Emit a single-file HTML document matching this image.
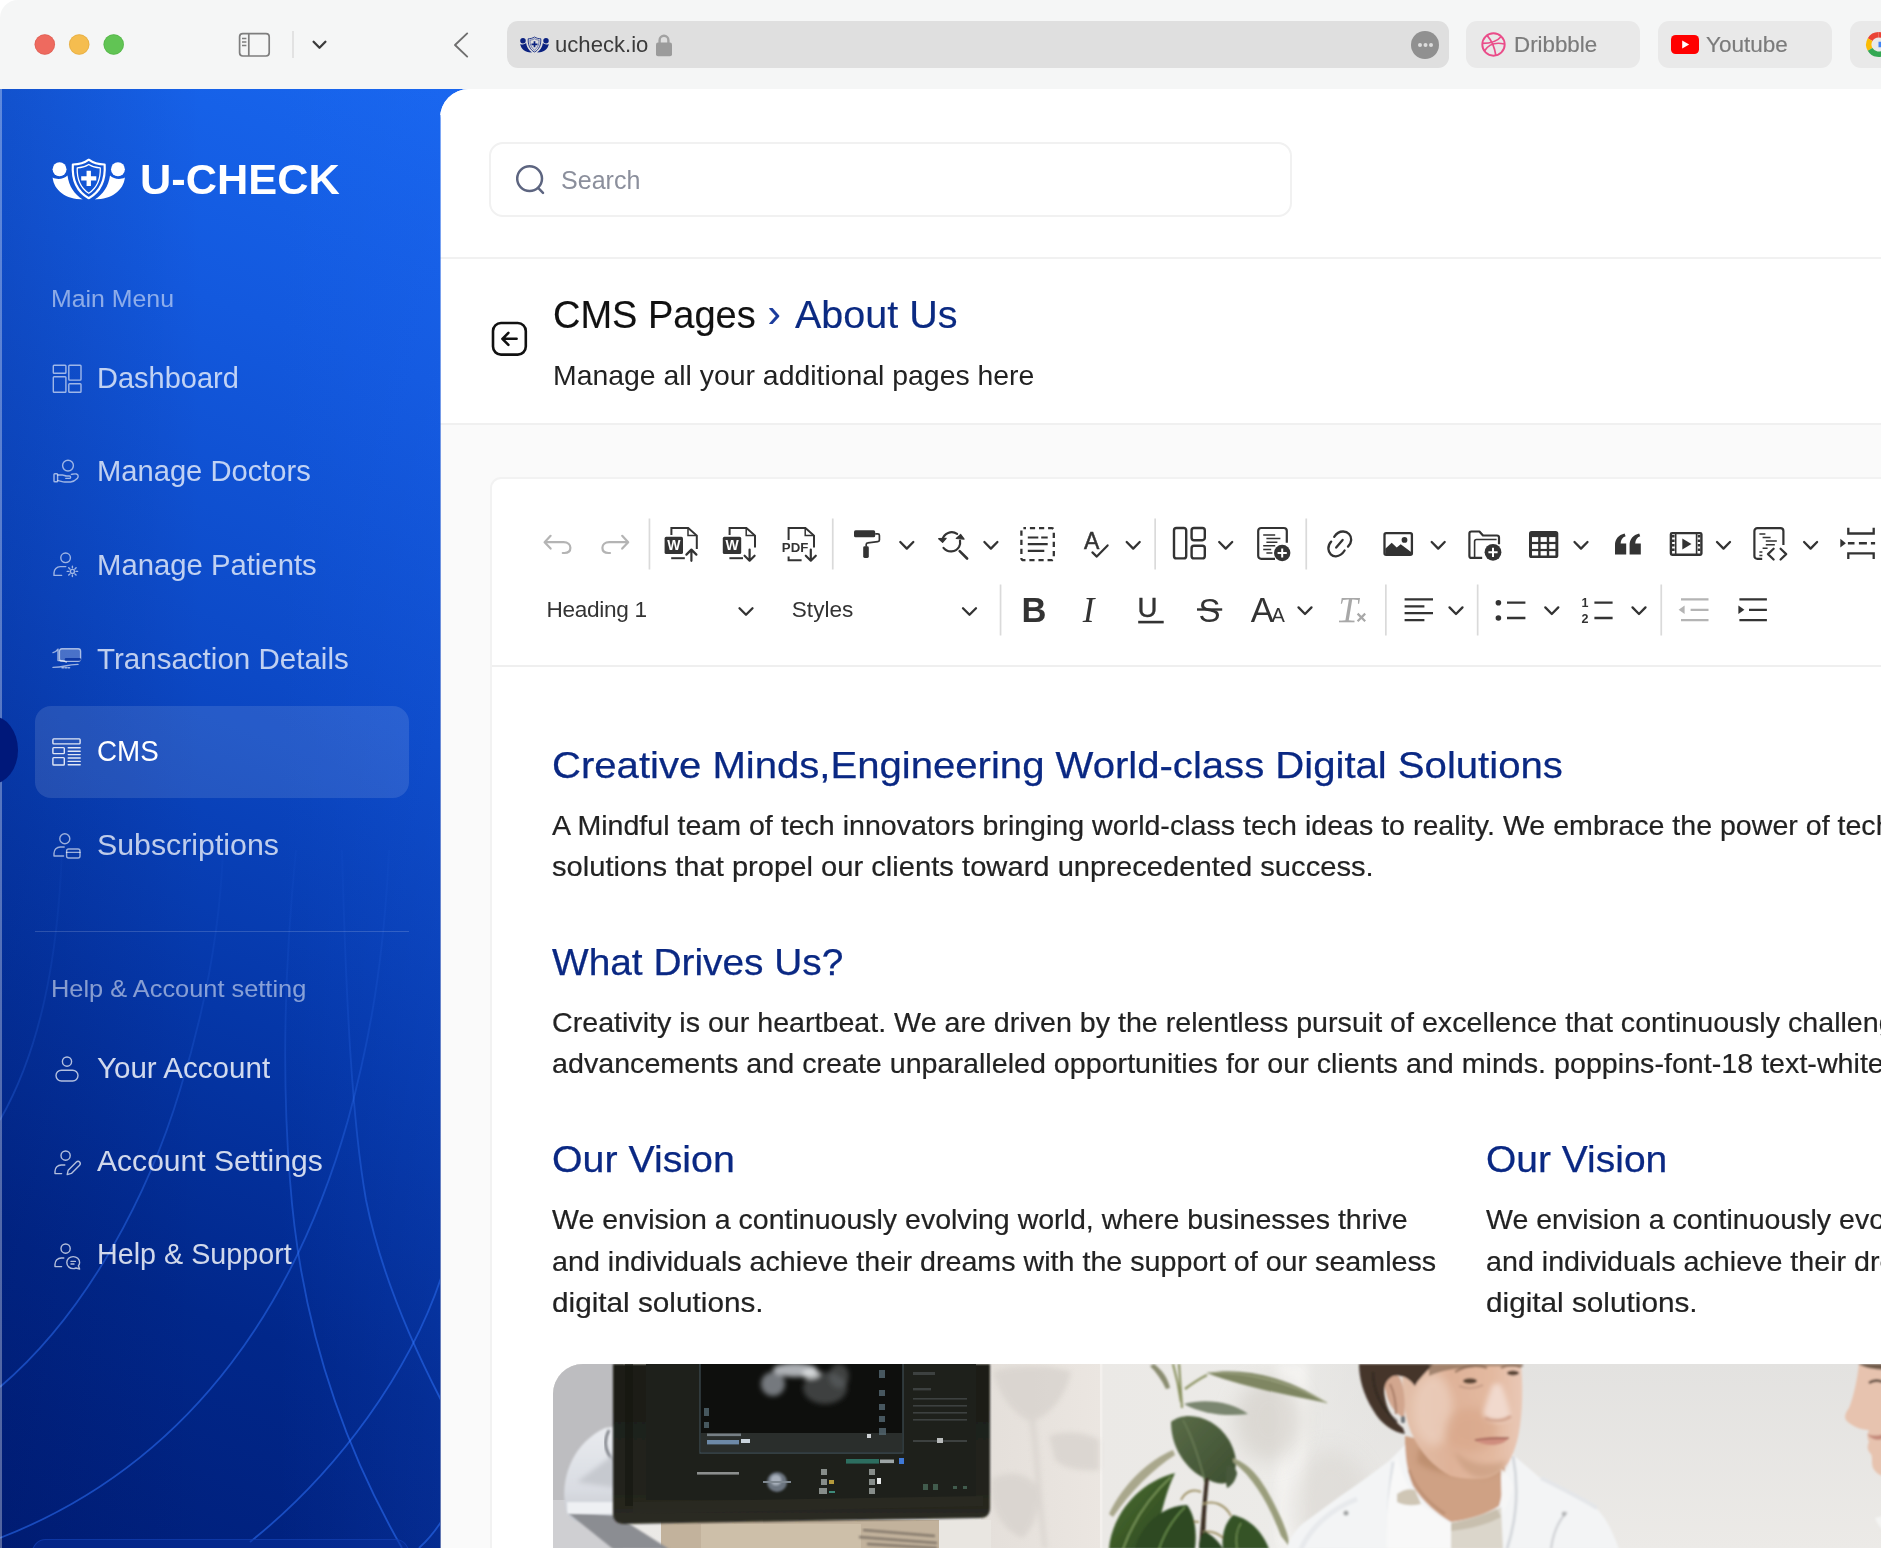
<!DOCTYPE html>
<html lang="en">
<head>
<meta charset="utf-8">
<title>U-CHECK – CMS Pages › About Us</title>
<style>
*{box-sizing:border-box;margin:0;padding:0}
html,body{width:1881px;height:1548px;overflow:hidden;background:#fff}
body{position:relative;font-family:"Liberation Sans",Arial,Helvetica,sans-serif;color:#1d1d1f;-webkit-font-smoothing:antialiased}
.abs{position:absolute}
.t{position:absolute;white-space:nowrap;line-height:1;transform-origin:0 50%}
svg{display:block;overflow:visible}

/* ---------- browser chrome ---------- */
#win{will-change:transform;position:absolute;left:0;top:0;width:1881px;height:1548px;border-top-left-radius:18px;overflow:hidden;background:#fff}
#chrome{position:absolute;left:0;top:0;width:1881px;height:89px;background:#f5f6f6}
.dot{position:absolute;top:34px;width:20px;height:20px;border-radius:50%}
#urlbar{position:absolute;left:507px;top:21px;width:942px;height:47px;border-radius:11px;background:#dfdfdf}
.tab{position:absolute;top:21px;height:47px;border-radius:11px;background:#e9e9e9}
.tab .t{color:#7b7b7b;-webkit-text-stroke:.2px #7b7b7b}

/* ---------- sidebar ---------- */
#side{position:absolute;left:0;top:89px;width:480px;height:1459px;overflow:hidden;
  background:linear-gradient(90deg,rgba(0,8,70,.15) 0%,rgba(0,8,70,0) 42%,rgba(40,110,255,0) 58%,rgba(40,110,255,.11) 92%),linear-gradient(201deg,#1866ee 0%,#1359de 19%,#0c49c6 41%,#0537a8 62%,#01278a 81%,#001f7a 100%)}
#side .edge{position:absolute;left:0;top:0;width:2px;height:100%;background:rgba(255,255,255,.32)}
.sec{color:rgba(255,255,255,.52);font-size:23px}
.mi{color:rgba(255,255,255,.74);font-size:27.5px}
.mi.on{color:#fff}
.mi.acc{color:rgba(255,255,255,.82)}
.ico.a *{stroke:rgba(255,255,255,.7)}
#active{position:absolute;left:35px;top:616.5px;width:374px;height:92.5px;border-radius:16px;background:rgba(255,255,255,.115)}
#notch{position:absolute;left:-34px;top:627px;width:52px;height:68px;border-radius:50%;background:#00187a}
#sdiv{position:absolute;left:35px;top:841.5px;width:374px;height:1.3px;background:rgba(255,255,255,.16)}
.ico{position:absolute}
.ico *{fill:none;stroke:rgba(255,255,255,.6);stroke-width:1.4;stroke-linecap:round;stroke-linejoin:round}
.ico.on *{stroke:rgba(255,255,255,.86)}

/* ---------- main ---------- */
#main{position:absolute;left:440px;top:89px;width:1441px;height:1459px;background:#fafafa;border-top-left-radius:29px;overflow:hidden}
#main .seam{z-index:5;position:absolute;left:0;top:26px;width:1px;height:1440px;background:linear-gradient(180deg,rgba(40,110,240,.6),rgba(10,60,180,.6) 50%,rgba(0,34,130,.6))}
#top{position:absolute;left:0;top:0;width:1441px;height:170px;background:#fff;border-bottom:2px solid #f1f1f1}
#search{position:absolute;left:49px;top:53px;width:803px;height:75px;border:2px solid #f1f1f1;border-radius:14px;background:#fff}
#head{position:absolute;left:0;top:170px;width:1441px;height:166px;background:#fff;border-bottom:2px solid #f0f0f0}
#card{position:absolute;left:50px;top:388px;width:1420px;height:1100px;background:#fff;border:2px solid #f2f2f2;border-radius:11px 0 0 0}
#tbline{position:absolute;left:0;top:186px;width:1420px;height:2px;background:#efefef}
.h{color:#0a2883;font-size:37px;-webkit-text-stroke:.25px #0a2883}
.p{color:#222;font-size:27.5px;-webkit-text-stroke:.2px #222}
.vs{position:absolute;width:2px;background:#dcdcdc}
.ti{position:absolute}
.ti *{fill:none;stroke:#333;stroke-width:2;stroke-linecap:round;stroke-linejoin:round}
.ti .f{fill:#333;stroke:none}
.ti.dim *{stroke:#a9a9a9}
.ti.dim .f{fill:#a9a9a9;stroke:none}
.cv{position:absolute}
.cv path{fill:none;stroke:#333;stroke-width:2.4;stroke-linecap:round;stroke-linejoin:round}
.tl{color:#333;font-size:22px}
#photo{position:absolute;left:60.5px;top:885px;width:1400px;height:200px;border-radius:30px 0 0 0;overflow:hidden;background:#e4e2df}
h1.t,h2.t{font-weight:400}
.ttl{-webkit-text-stroke:.15px currentColor}
</style>
</head>
<body>
<div id="win">
<svg width="0" height="0" style="position:absolute">
  <defs>
    <symbol id="logo" viewBox="0 0 74 42">
      <circle cx="7.6" cy="11.2" r="7" fill="currentColor"/>
      <circle cx="66.4" cy="11.2" r="7" fill="currentColor"/>
      <path d="M.6 19.5C2 32.5 14 41.6 31 41.6 22.5 36.5 17 28 15.6 17.4 12 21 5.6 22.2.6 19.5Z" fill="currentColor"/>
      <path d="M73.4 19.5C72 32.5 60 41.6 43 41.6 51.500 36.5 57 28 58.4 17.400 62 21 68.4 22.200 73.4 19.5Z" fill="currentColor"/>
      <path d="M37 1.600C32.500 5 26.500 6.400 21 6.400 20 21.500 25 33.500 37 40.400 49 33.500 54 21.500 53 6.400 47.500 6.400 41.500 5 37 1.600Z" fill="none" stroke="currentColor" stroke-width="2.2" stroke-linejoin="round"/>
      <path d="M37 6.400C33.600 8.600 29.500 9.700 25.400 9.900 25 21 28.800 30 37 35.400 45.200 30 49 21 48.600 9.900 44.500 9.700 40.400 8.600 37 6.400Z" fill="none" stroke="currentColor" stroke-width="1.300" stroke-linejoin="round"/>
      <path d="M34.800 12.800h4.400v5.400h5.400v4.400h-5.400v5.400h-4.400v-5.400h-5.400v-4.400h5.400z" fill="currentColor"/>
    </symbol>
  </defs>
</svg>

<!-- ================= BROWSER CHROME ================= -->
<div id="chrome">
  <svg class="abs" style="left:30px;top:30px" width="100" height="30" viewBox="30 30 100 30">
    <circle cx="44.800" cy="44.500" r="10.200" fill="#ee6a5f"/><circle cx="44.800" cy="44.500" r="9.800" fill="none" stroke="#c9544a" stroke-opacity=".45" stroke-width=".8"/>
    <circle cx="79.200" cy="44.500" r="10.200" fill="#f5bd4f"/><circle cx="79.200" cy="44.500" r="9.800" fill="none" stroke="#cf9a34" stroke-opacity=".45" stroke-width=".8"/>
    <circle cx="113.700" cy="44.500" r="10.200" fill="#61c454"/><circle cx="113.700" cy="44.500" r="9.800" fill="none" stroke="#46a23b" stroke-opacity=".45" stroke-width=".8"/>
  </svg>
  <!-- sidebar toggle -->
  <svg class="abs" style="left:238px;top:32px" width="33" height="26" viewBox="0 0 33 26">
    <rect x="1.6" y="1.6" width="29.6" height="22.4" rx="3.2" fill="none" stroke="#7e7e7e" stroke-width="1.7"/>
    <path d="M10.8 2v22" stroke="#7e7e7e" stroke-width="1.7" fill="none"/>
    <path d="M4 6.4h4.4M4 10h4.4M4 13.6h4.4" stroke="#7e7e7e" stroke-width="1.5" fill="none"/>
  </svg>
  <div class="abs" style="left:292px;top:31px;width:1.5px;height:27px;background:#e2e2e2"></div>
  <svg class="abs" style="left:312px;top:40px" width="15" height="10" viewBox="0 0 15 10"><path d="M1.6 1.8l5.9 6 5.9-6" fill="none" stroke="#3b3b3b" stroke-width="2.3" stroke-linecap="round" stroke-linejoin="round"/></svg>
  <svg class="abs" style="left:453px;top:32px" width="16" height="26" viewBox="0 0 16 26"><path d="M14.2 1.4L2 13l12.2 11.6" fill="none" stroke="#6f6f6f" stroke-width="1.9" stroke-linecap="round" stroke-linejoin="round"/></svg>
  <div id="urlbar">
    <svg class="abs" style="left:13px;top:15px" width="29" height="17" viewBox="0 0 74 42"><use href="#logo" color="#0b2280"/></svg>
    <span class="t" style="left:48.30px;top:12.20px;font-size:22.8px;transform:scaleX(0.9699);color:#3a3a3a;">ucheck.io</span>
    <svg class="abs" style="left:148px;top:12px" width="18" height="24" viewBox="0 0 18 24">
      <path d="M4.6 10V7.2a4.4 4.4 0 0 1 8.8 0V10" fill="none" stroke="#a2a2a2" stroke-width="2.4"/>
      <rect x="1" y="9.6" width="16" height="13.6" rx="2" fill="#9b9b9b"/>
    </svg>
    <div class="abs" style="left:904px;top:10px;width:28px;height:28px;border-radius:50%;background:#909090"></div>
    <div class="abs" style="left:910.5px;top:22px;width:4px;height:4px;border-radius:50%;background:#dcdcdc;box-shadow:5.5px 0 0 #dcdcdc,11px 0 0 #dcdcdc"></div>
  </div>
  <div class="tab" style="left:1466px;width:174px">
    <svg class="abs" style="left:15px;top:11px" width="25" height="25" viewBox="0 0 25 25">
      <circle cx="12.5" cy="12.5" r="11.2" fill="none" stroke="#ea4c89" stroke-width="1.9"/>
      <path d="M6.2 3.6c4 4.4 7.2 10.6 8.6 19.6M1.6 11.4c7.4 0 14.2-1.6 18.4-6.6M3.4 19c3.6-5.8 10.6-9.2 20-7" fill="none" stroke="#ea4c89" stroke-width="1.7"/>
    </svg>
    <span class="t" style="left:48.30px;top:12.64px;font-size:22.4px;transform:scaleX(0.9975);">Dribbble</span>
  </div>
  <div class="tab" style="left:1658px;width:174px">
    <svg class="abs" style="left:13px;top:14px" width="28" height="19" viewBox="0 0 28 19">
      <rect x="0" y="0" width="28" height="19" rx="4.6" fill="#f00"/>
      <path d="M11.2 5.4v8.2l7-4.1z" fill="#fff"/>
    </svg>
    <span class="t" style="left:48.30px;top:12.64px;font-size:22.4px;transform:scaleX(1.0037);">Youtube</span>
  </div>
  <div class="tab" style="left:1850px;width:174px">
    <svg class="abs" style="left:15px;top:10px" width="27" height="27" viewBox="0 0 27 27">
      <g fill="none" stroke-width="5.400">
        <path d="M13.500 3.700a9.800 9.800 0 0 1 7 2.900" stroke="#ea4335"/>
        <path d="M5.100 8.600A9.800 9.800 0 0 1 13.500 3.700" stroke="#ea4335"/>
        <path d="M5.100 18.400a9.800 9.800 0 0 1 0-9.800" stroke="#fbbc05"/>
        <path d="M20.300 20.600a9.800 9.800 0 0 1-15.200-2.200" stroke="#34a853"/>
        <path d="M13.500 13.500h9.800a9.800 9.800 0 0 1-3 7.100" stroke="#4285f4"/>
      </g>
    </svg>
  </div>
</div>

<!-- ================= SIDEBAR ================= -->
<div id="side">
  <svg class="abs" style="left:0;top:0" width="441" height="1459" viewBox="0 89 441 1459">
    <defs>
      <linearGradient id="arcs" gradientUnits="userSpaceOnUse" x1="0" y1="840" x2="0" y2="1420">
        <stop offset="0" stop-color="#3a7cff" stop-opacity=".03"/>
        <stop offset=".3" stop-color="#3a7cff" stop-opacity=".14"/>
        <stop offset=".62" stop-color="#3378ff" stop-opacity=".4"/>
        <stop offset="1" stop-color="#2f74ff" stop-opacity=".52"/>
      </linearGradient>
    </defs>
    <g fill="none" stroke="url(#arcs)" stroke-width="1.800">
      <path d="M62 850C58 960 40 1050 0 1120"/>
      <path d="M223 850C220 930 205 1010 180 1090C150 1190 90 1310 0 1387"/>
      <path d="M389 850C384 960 370 1040 348 1120C300 1290 200 1460 0 1538"/>
      <path d="M296 850C284 970 282 1080 290 1180C300 1320 340 1440 402 1548"/>
      <path d="M342 850C346 1000 352 1120 366 1200C380 1270 410 1340 441 1400"/>
      <path d="M250 1542C340 1470 410 1370 441 1278"/>
      <path d="M419 1548C428 1540 435 1531 441 1522"/>
    </g>
    <rect x="32.5" y="1539.5" width="376" height="30" rx="13" fill="#0a2f9c" fill-opacity=".5" stroke="#1440b4" stroke-opacity=".7" stroke-width="1.200"/>
  </svg>
  <div class="edge"></div>

  <svg class="abs" style="left:51.5px;top:69px" width="73.5" height="42" viewBox="0 0 74 42"><use href="#logo" color="#fff"/></svg>
  <span class="t" style="left:139.80px;top:69.20px;font-size:43px;transform:scaleX(1.0073);font-weight:700;color:#fff;">U-CHECK</span>

  <span class="t sec" style="left:50.60px;top:197.96px;font-size:24.5px;transform:scaleX(1.0151);">Main Menu</span>

  <svg class="ico" style="left:51.500px;top:274.500px" width="30" height="30" viewBox="0 0 30 30"><rect x="1.300" y="1.300" width="12.600" height="8" rx=".8"/><rect x="1.300" y="12.800" width="12.600" height="15.400" rx=".8"/><rect x="16.800" y="1.300" width="12.200" height="14.800" rx=".8"/><rect x="16.800" y="19.800" width="12.200" height="8.400" rx=".8"/></svg>
  <span class="t mi" style="left:96.60px;top:274.78px;font-size:29.2px;transform:scaleX(0.9936);">Dashboard</span>

  <svg class="ico" style="left:53px;top:370px" width="28" height="26" viewBox="0 0 28 26"><circle cx="15" cy="6.600" r="5.400"/><rect x="1" y="14.800" width="3.600" height="8" rx=".8"/><path d="M4.800 16h4.600c1.600 0 2.600 1 4.200 1h2.800c1.600 0 1.600 2.400 0 2.400h-3.600M4.800 21.600c2.800 0 4 1.400 6.800 1.400h6c2.800 0 5-1.800 6.600-3.400 1.200-1.400 1.600-3.800-.8-4.600-1.400-.4-3 0-5 .4"/></svg>
  <span class="t mi" style="left:96.60px;top:368.38px;font-size:29.2px;transform:scaleX(0.9983);">Manage Doctors</span>

  <svg class="ico" style="left:53px;top:463px" width="28" height="26" viewBox="0 0 28 26"><circle cx="12.6" cy="5.800" r="4.800"/><path d="M1 23.400v-2.600c0-3.400 2.800-6.200 6.200-6.200h5.600M1 23.400h7.600"/><circle cx="19.400" cy="19.400" r="2"/><path d="M19.400 14.200v1.600M19.400 23v1.600M14.200 19.400h1.600M23 19.400h1.600M15.700 15.700l1.200 1.200M21.900 21.900l1.200 1.200M15.700 23.100l1.200-1.200M21.900 16.900l1.200-1.200"/></svg>
  <span class="t mi" style="left:96.60px;top:461.98px;font-size:29.2px;transform:scaleX(1.0029);">Manage Patients</span>

  <svg class="ico" style="left:52px;top:558.500px" width="30" height="22" viewBox="0 0 30 22"><rect x="7.400" y=".8" width="21.200" height="12.400" rx="2.400" style="fill:rgba(255,255,255,.26)"/><path d="M14 11.400h13.600" style="stroke:rgba(8,50,160,.9);stroke-width:2.600"/><path d="M1 4.600c2-.4 3.800-1.600 5-3.400v11.400h4.400c1.600 0 2.400 1 4 1.400"/><path d="M1 19.400c4 0 8-.4 12-1.400 4-1 8-1.600 13-1.600"/><path d="M10 19.800h8" style="stroke-dasharray:1.600 1.400"/></svg>
  <span class="t mi" style="left:96.60px;top:555.58px;font-size:29.2px;transform:scaleX(1.0122);">Transaction Details</span>

  <div id="notch"></div>
  <div id="active"></div>
  <svg class="ico on" style="left:52px;top:648.500px" width="29" height="28" viewBox="0 0 29 28"><rect x=".9" y=".9" width="27.2" height="5" rx=".8"/><rect x=".9" y="9.600" width="11.4" height="6" rx=".8"/><rect x=".9" y="19.600" width="11.4" height="7.400" rx=".8"/><path d="M16.200 9.800h12M16.200 13.200h12M16.200 16.600h12M16.200 20h12M16.200 23.400h12M16.200 26.800h12"/></svg>
  <span class="t mi on" style="left:96.60px;top:648.28px;font-size:29.2px;transform:scaleX(0.9509);">CMS</span>

  <svg class="ico" style="left:53px;top:743px" width="28" height="27" viewBox="0 0 28 27"><circle cx="11.800" cy="6.800" r="5"/><path d="M1 24v-2.800c0-3.400 2.800-6.200 6.200-6.200h4M1 24h9.600"/><rect x="13.600" y="17" width="13.400" height="9" rx="2"/><path d="M13.600 20.400h13.400"/></svg>
  <span class="t mi" style="left:96.60px;top:741.58px;font-size:29.2px;transform:scaleX(1.0386);">Subscriptions</span>

  <div id="sdiv"></div>
  <span class="t sec" style="left:50.60px;top:888.16px;font-size:24.5px;transform:scaleX(1.0354);">Help &amp; Account setting</span>

  <svg class="ico a" style="left:55px;top:967px" width="24" height="26" viewBox="0 0 24 26"><circle cx="12" cy="5.600" r="4.600"/><rect x="1" y="14.200" width="22" height="10.800" rx="5.400"/></svg>
  <span class="t mi acc" style="left:96.60px;top:964.98px;font-size:29.2px;transform:scaleX(1.0126);">Your Account</span>

  <svg class="ico a" style="left:54px;top:1061px" width="27" height="26" viewBox="0 0 27 26"><circle cx="11.600" cy="5.600" r="4.600"/><path d="M1 23.600v-2.400c0-3.400 2.800-6.200 6.200-6.200h3.600M1 23.600h6.600"/><path d="M13.200 24.600l1-4.400 8.200-8.200c1-1 2.400-1 3.200 0s1 2.200 0 3.200l-8.200 8.200z"/></svg>
  <span class="t mi acc" style="left:96.60px;top:1058.08px;font-size:29.2px;transform:scaleX(1.0303);">Account Settings</span>

  <svg class="ico a" style="left:54px;top:1154px" width="27" height="27" viewBox="0 0 27 27"><circle cx="11.600" cy="5.600" r="4.600"/><path d="M1 23.600v-2.400c0-3.400 2.800-6.200 6.200-6.200h2.600M1 23.600h6.600"/><path d="M19.200 13.600c-3.600 0-6.400 2.600-6.400 6s2.800 6 6.400 6c1 0 2-.2 2.800-.6l3.600 1-1.200-3.200c.8-1 1.200-2 1.200-3.200 0-3.400-2.800-6-6.400-6z"/><path d="M17 18.400h4.400M17 21h3"/></svg>
  <span class="t mi acc" style="left:96.60px;top:1151.28px;font-size:29.2px;transform:scaleX(0.9835);">Help &amp; Support</span>
</div>

<!-- ================= MAIN ================= -->
<div id="main">
  <div class="seam"></div>
  <div id="top">
    <div id="search">
      <svg class="abs" style="left:24px;top:20px" width="32" height="32" viewBox="0 0 32 32"><circle cx="14.6" cy="14.6" r="12.4" fill="none" stroke="#5d6580" stroke-width="2.5"/><path d="M23.400 24.200l4.600 4.600" stroke="#5d6580" stroke-width="2.5" stroke-linecap="round" fill="none"/></svg>
      <span class="t" style="left:69.50px;top:23.54px;font-size:25px;transform:scaleX(1.0020);color:#8b8f9c;">Search</span>
    </div>
  </div>
  <div id="head">
    <svg class="abs" style="left:50.5px;top:62px" width="37" height="36" viewBox="0 0 37 36"><rect x="2" y="2" width="32.8" height="31.6" rx="8" fill="none" stroke="#111" stroke-width="2.6"/><path d="M25.600 17.800H11.800M17.400 11.800l-6 6 6 6" fill="none" stroke="#111" stroke-width="2.6" stroke-linecap="round" stroke-linejoin="round"/></svg>
    <span class="t ttl" style="left:112.50px;top:36.06px;font-size:39.5px;transform:scaleX(0.9620);color:#111;">CMS Pages</span>
    <span class="t ttl" style="left:327.50px;top:33.64px;font-size:40px;color:#1b3c9c;">›</span>
    <span class="t ttl" style="left:355.00px;top:36.06px;font-size:39.5px;transform:scaleX(0.9999);color:#0b2a82;">About Us</span>
    <span class="t" style="left:112.50px;top:101.57px;font-size:28.5px;transform:scaleX(0.9960);color:#222;">Manage all your additional pages here</span>
  </div>

  <div id="card">
    <div id="tbline"></div>
    <svg class="abs" id="tb" style="left:0;top:0" width="1389" height="186" viewBox="492 479 1389 186" font-family="'Liberation Sans',Arial,sans-serif">
      <defs>
        <path id="chev" d="M-6.500 -3.400L0 3.200 6.500 -3.400" fill="none" stroke="#333" stroke-width="2.300" stroke-linecap="round" stroke-linejoin="round"/>
      </defs>
      <g fill="#dadada">
        <rect x="648.6" y="518.5" width="1.700" height="51"/><rect x="831.900" y="518.5" width="1.700" height="51"/>
        <rect x="1154.3" y="518.5" width="1.700" height="51"/><rect x="1305.4" y="518.5" width="1.700" height="51"/>
        <rect x="999.700" y="584.5" width="1.700" height="51"/><rect x="1385" y="584.5" width="1.700" height="51"/>
        <rect x="1476.800" y="584.5" width="1.700" height="51"/><rect x="1660.400" y="584.5" width="1.700" height="51"/>
      </g>
      <!-- row 1 chevrons -->
      <use href="#chev" x="906.800" y="545.400"/><use href="#chev" x="990.900" y="545.400"/><use href="#chev" x="1133.2" y="545.400"/>
      <use href="#chev" x="1225.700" y="545.400"/><use href="#chev" x="1438.2" y="545.400"/><use href="#chev" x="1581" y="545.400"/>
      <use href="#chev" x="1723.500" y="545.400"/><use href="#chev" x="1810.600" y="545.400"/>
      <!-- row 2 chevrons -->
      <use href="#chev" x="746" y="611.600"/><use href="#chev" x="969.500" y="611.600"/><use href="#chev" x="1305" y="610.800"/>
      <use href="#chev" x="1456" y="610.800"/><use href="#chev" x="1551.800" y="610.800"/><use href="#chev" x="1639" y="610.800"/>

      <!-- undo / redo (disabled) -->
      <g fill="none" stroke="#b4b4b4" stroke-width="2.200" stroke-linecap="round" stroke-linejoin="round">
        <path d="M550.600 535.800l-6 6.400 6 6.400M545 542.200h18.600c4.200 0 6.800 2.400 6.800 5.600s-2.400 5.200-6 5.200h-1.600"/>
        <path d="M622.200 535.800l6 6.400-6 6.400M627.800 542.200h-18.600c-4.200 0-6.800 2.400-6.800 5.600s2.400 5.200 6 5.200h1.600"/>
      </g>

      <!-- import from word -->
      <g transform="translate(664.600 527)">
        <path d="M6.800 8V1h16.800l8.600 7.600V22" fill="none" stroke="#333" stroke-width="2"/>
        <path d="M23.400 1.400v7h8" fill="none" stroke="#333" stroke-width="1.500"/>
        <rect x="0" y="9.800" width="18.400" height="17.200" rx="1.600" fill="#333"/>
        <text x="9.200" y="23.400" font-size="14" font-weight="700" text-anchor="middle" fill="#fff">W</text>
        <path d="M6.600 31.200h13.600" stroke="#333" stroke-width="2" fill="none"/>
        <path d="M26.800 33.800V23M21.800 27.600l5-5 5 5" fill="none" stroke="#333" stroke-width="2.200" stroke-linecap="round" stroke-linejoin="round"/>
      </g>
      <!-- export to word -->
      <g transform="translate(722.800 527)">
        <path d="M6.800 8V1h16.800l8.600 7.600V20.500" fill="none" stroke="#333" stroke-width="2"/>
        <path d="M23.400 1.400v7h8" fill="none" stroke="#333" stroke-width="1.500"/>
        <rect x="0" y="9.800" width="18.400" height="17.200" rx="1.600" fill="#333"/>
        <text x="9.200" y="23.400" font-size="14" font-weight="700" text-anchor="middle" fill="#fff">W</text>
        <path d="M6.600 31.200h13.600" stroke="#333" stroke-width="2" fill="none"/>
        <path d="M26.800 22.500V33.300M21.800 28.700l5 5 5-5" fill="none" stroke="#333" stroke-width="2.200" stroke-linecap="round" stroke-linejoin="round"/>
      </g>
      <!-- export to pdf -->
      <g transform="translate(781.800 527)">
        <path d="M6.800 13V1h16.800l8.600 7.600V20.500" fill="none" stroke="#333" stroke-width="2"/>
        <path d="M23.400 1.400v7h8" fill="none" stroke="#333" stroke-width="1.500"/>
        <text x="0" y="25" font-size="12.500" font-weight="700" fill="#333" textLength="26.500" lengthAdjust="spacingAndGlyphs">PDF</text>
        <path d="M6.800 29.500v3.700h13" stroke="#333" stroke-width="2" fill="none"/>
        <path d="M29 22.500V33.300M24 28.700l5 5 5-5" fill="none" stroke="#333" stroke-width="2.200" stroke-linecap="round" stroke-linejoin="round"/>
      </g>

      <!-- format painter -->
      <g transform="translate(854 530.300)">
        <rect x="0" y="0" width="21.200" height="7" rx="1.600" fill="#333"/>
        <path d="M21.200 3.500h2.600c1 0 1.600.6 1.600 1.600v4.500c0 1-.6 1.600-1.600 1.700l-10 1.300c-1 .1-1.600.8-1.600 1.700v2.200" fill="none" stroke="#333" stroke-width="1.700"/>
        <rect x="9.200" y="16" width="5.600" height="11.700" rx="1.400" fill="#333"/>
      </g>
      <!-- find and replace -->
      <g transform="translate(937.900 530.300)" fill="none" stroke="#333" stroke-width="2.200" stroke-linecap="round" stroke-linejoin="round">
        <path d="M19.200 3.600A9.500 9.500 0 0 0 4.500 9.600"/>
        <path d="M5.600 17.600a9.500 9.500 0 0 0 15.600-1.200c1-1.900 1.300-4 .9-6"/>
        <path d="M.8 8.400l3.900 3.600 3.500-4z" fill="#333" stroke-width="1.200"/>
        <path d="M18.400 8.200l4.400-4 3.400 4.600z" fill="#333" stroke-width="1.200"/>
        <path d="M21.800 20.800l7.400 7.400" stroke-width="2.600"/>
      </g>
      <!-- select all -->
      <g transform="translate(1020.200 527)">
        <rect x="1.200" y="1.200" width="32.400" height="32" rx="2" fill="none" stroke="#333" stroke-width="2.300" stroke-dasharray="5.200 3.900" stroke-dashoffset="2.600"/>
        <path d="M7.600 10.500h10.500M21 10.500h6.500M7.600 17.200h19.900M7.600 23.900h16.500" fill="none" stroke="#333" stroke-width="2.200"/>
      </g>
      <!-- case change -->
      <g transform="translate(1084 532)">
        <text x="0" y="16.800" font-size="23" fill="#333" stroke="#333" stroke-width=".5">A</text>
        <path d="M8.400 20.400l4.400 4.200L23.600 13.400" fill="none" stroke="#333" stroke-width="2.200" stroke-linecap="round" stroke-linejoin="round"/>
      </g>

      <!-- template -->
      <g transform="translate(1172.800 526.800)" fill="none" stroke="#333" stroke-width="2.400" stroke-linejoin="round">
        <rect x="1.200" y="1.200" width="12.200" height="30.400" rx="2.400"/>
        <rect x="18.800" y="1.200" width="13.200" height="12.200" rx="2.400"/>
        <rect x="18.800" y="19" width="13.200" height="12.600" rx="2.400"/>
      </g>
      <!-- insert template -->
      <g transform="translate(1257 526.800)">
        <path d="M18 32H4.200C2.400 32 1.200 30.800 1.200 29V4.200C1.200 2.400 2.400 1.200 4.200 1.200h22.600c1.800 0 3 1.200 3 3V16" fill="none" stroke="#333" stroke-width="2.200"/>
        <path d="M6.200 8.200h12M9.400 11.800h14M9.400 15.400h11M6.200 19h12M6.200 22.600h8M9.400 26.200h6" fill="none" stroke="#333" stroke-width="1.500"/>
        <circle cx="25.200" cy="26.200" r="8.200" fill="#333"/>
        <path d="M25.200 21.600v9.200M20.600 26.200h9.200" stroke="#fff" stroke-width="2" fill="none"/>
      </g>

      <!-- link -->
      <g transform="translate(1327 530.300)" fill="none" stroke="#333" stroke-width="2.300" stroke-linecap="round">
        <path d="M7.200 6.600C9.600 2.800 12.600 1.100 16.200 1.200 21 1.300 24.400 5 24.200 9.600 24.100 12.100 23 14.300 21 16.300"/>
        <path d="M4.200 11.300C2.200 13.500 1.300 16 1.400 18.600 1.600 23 5 26.200 9 26 12.500 25.800 15.500 23.600 17.600 20.200"/>
        <path d="M9.200 17.200l6.400-7.600"/>
      </g>
      <!-- image -->
      <g transform="translate(1383.300 531.900)">
        <rect x="1.200" y="1.200" width="27.400" height="21.800" rx="1.600" fill="none" stroke="#333" stroke-width="2.300"/>
        <path d="M2 22.400v-5.600l6.400-6 5 4.800 4-3.200 10.400 7.600v2.400z" fill="#333"/>
        <circle cx="21.200" cy="8" r="2.900" fill="#333"/>
      </g>
      <!-- file manager -->
      <g transform="translate(1468.200 530.300)">
        <path d="M14 27.600H3.200c-1.200 0-2-.8-2-2V3.200c0-1.200.8-2 2-2h8l3.600 4h14c1.200 0 2 .8 2 2V14" fill="none" stroke="#333" stroke-width="2.200" stroke-linejoin="round"/>
        <path d="M6.400 27V11.200c0-1.200.8-2 2-2h20" fill="none" stroke="#333" stroke-width="1.600"/>
        <circle cx="24.800" cy="22" r="8.400" fill="#333"/>
        <path d="M24.800 17.400v9.200M20.200 22h9.200" stroke="#fff" stroke-width="2" fill="none"/>
      </g>
      <!-- table -->
      <g transform="translate(1529 530.900)">
        <rect x="0" y="0" width="29.300" height="27.200" rx="2.600" fill="#333"/>
        <g fill="#fff">
          <rect x="3" y="6.200" width="6.200" height="4.800"/><rect x="11.600" y="6.200" width="6.200" height="4.800"/><rect x="20.200" y="6.200" width="6.200" height="4.800"/>
          <rect x="3" y="13.200" width="6.200" height="4.800"/><rect x="11.600" y="13.200" width="6.200" height="4.800"/><rect x="20.200" y="13.200" width="6.200" height="4.800"/>
          <rect x="3" y="20.200" width="6.200" height="4.400"/><rect x="11.600" y="20.200" width="6.200" height="4.400"/><rect x="20.200" y="20.200" width="6.200" height="4.400"/>
        </g>
      </g>
      <!-- block quote -->
      <g transform="translate(1615 533.400)" fill="#333">
        <path d="M0 21.200V11.600C0 5.600 3.600 1.400 9.600 0l1 2.800C7.400 4 5.800 6.400 5.600 10h5.600v11.200z"/>
        <path d="M14.600 21.200V11.600c0-6 3.600-10.200 9.600-11.600l1 2.800C22 4 20.400 6.400 20.200 10h5.600v11.200z"/>
      </g>
      <!-- media -->
      <g transform="translate(1669.700 531.900)">
        <rect x="1.200" y="1.200" width="30.500" height="21.700" rx="1.200" fill="none" stroke="#333" stroke-width="2.400"/>
        <path d="M6 1.200v21.700M26.900 1.200v21.700" stroke="#333" stroke-width="1.600" fill="none"/>
        <path d="M3.600 3.200v18M29.300 3.200v18" stroke="#333" stroke-width="2.600" stroke-dasharray="2.300 2.200" fill="none"/>
        <path d="M12.600 6.600v10.900l9.200-5.450z" fill="#333"/>
      </g>
      <!-- code snippet -->
      <g transform="translate(1753.200 526.900)">
        <path d="M9 32H4.200C2.400 32 1.200 30.800 1.200 29V4.200C1.200 2.400 2.400 1.200 4.200 1.200h23c1.800 0 3 1.200 3 3V18" fill="none" stroke="#333" stroke-width="2.200"/>
        <path d="M6.200 7h6M9.400 10.600h8M12.600 14.200h11M12.600 17.800h9M9.400 21.400h5M6.200 25h3M6.200 28.600h3" fill="none" stroke="#333" stroke-width="1.500"/>
        <path d="M20.400 21.800l-5.600 5.400 5.600 5.400M27.400 21.800l5.600 5.400-5.600 5.400" fill="none" stroke="#333" stroke-width="2.200" stroke-linecap="round" stroke-linejoin="round"/>
      </g>
      <!-- page break -->
      <g transform="translate(1840.300 527.300)" fill="none" stroke="#333" stroke-width="2.300">
        <path d="M8 .4v5.800h25.400V.4"/>
        <path d="M8 31.800V26h25.400v5.800"/>
        <path d="M7.600 15.900h6.600M18.600 15.900h8M30.600 15.900h4.200" stroke-width="2.600"/>
        <path d="M0 11.500l5.600 4.400L0 20.300z" fill="#333" stroke="none"/>
      </g>

      <!-- row 2 : heading / styles dropdown labels -->
      <text x="546.500" y="616.800" font-size="22.600" fill="#333" textLength="100.500" lengthAdjust="spacing">Heading 1</text>
      <text x="791.800" y="616.800" font-size="22.600" fill="#333" textLength="61.500" lengthAdjust="spacing">Styles</text>

      <!-- bold / italic / underline / strike -->
      <text x="1021.600" y="621.900" font-size="34.500" font-weight="700" fill="#333">B</text>
      <text x="1082.800" y="621.900" font-size="35" font-style="italic" font-family="'Liberation Serif','DejaVu Serif',serif" fill="#333">I</text>
      <text x="1137.400" y="617" font-size="27.600" fill="#333" stroke="#333" stroke-width=".4">U</text>
      <rect x="1138.200" y="620.800" width="25.500" height="2.600" fill="#333"/>
      <text x="1198.500" y="621.700" font-size="33" fill="#333">S</text>
      <rect x="1197" y="608.300" width="25.200" height="2.400" fill="#333"/>
      <!-- font size -->
      <text x="1250.800" y="621.900" font-size="34.500" fill="#333">A</text>
      <text x="1271.500" y="621.900" font-size="20" fill="#333">A</text>
      <!-- remove format (disabled) -->
      <text x="1338.500" y="621.700" font-size="35" font-style="italic" font-family="'Liberation Serif','DejaVu Serif',serif" fill="#a8a8a8">T</text>
      <rect x="1339" y="620.600" width="15.500" height="1.700" fill="#a8a8a8"/>
      <path d="M1357.600 613.600l7.600 7.600M1365.200 613.600l-7.600 7.600" stroke="#a8a8a8" stroke-width="2.200" fill="none"/>

      <!-- align -->
      <path d="M1404.600 599.400h28.400M1404.600 606.300h19.800M1404.600 613.200h28.400M1404.600 620.100h19.800" stroke="#333" stroke-width="2.300" fill="none"/>
      <!-- bulleted list -->
      <circle cx="1498.400" cy="602.700" r="2.800" fill="#333"/><circle cx="1498.400" cy="618" r="2.800" fill="#333"/>
      <path d="M1507 602.700h18.400M1507 618h18.400" stroke="#333" stroke-width="2.300" fill="none"/>
      <!-- numbered list -->
      <text x="1581.600" y="606.600" font-size="12.500" font-weight="700" fill="#333">1</text>
      <text x="1581.600" y="623.200" font-size="12.500" font-weight="700" fill="#333">2</text>
      <path d="M1594.400 602.700h18.200M1594.400 618h18.200" stroke="#333" stroke-width="2.300" fill="none"/>
      <!-- outdent (disabled) -->
      <g stroke="#b4b4b4" stroke-width="2.300" fill="none">
        <path d="M1681 599.400h27.500M1690.600 609.800h17.900M1681 620.200h27.500"/>
        <path d="M1684.600 605.600v8.400l-6-4.200z" fill="#b4b4b4" stroke="none"/>
      </g>
      <!-- indent -->
      <g stroke="#333" stroke-width="2.300" fill="none">
        <path d="M1739.400 599.400h27.500M1749 609.800h17.900M1739.400 620.200h27.500"/>
        <path d="M1738.400 605.600v8.400l6-4.200z" fill="#333" stroke="none"/>
      </g>
    </svg>
    <h1 class="t h" style="left:60.00px;top:267.93px;font-size:37.3px;transform:scaleX(1.0748);">Creative Minds,Engineering World-class Digital Solutions</h1>
    <p class="t p" style="left:60.30px;top:333.00px;font-size:28px;transform:scaleX(1.0206);">A Mindful team of tech innovators bringing world-class tech ideas to reality. We embrace the power of technology to craft</p>
    <p class="t p" style="left:60.30px;top:374.20px;font-size:28px;transform:scaleX(1.0413);">solutions that propel our clients toward unprecedented success.</p>

    <h2 class="t h" style="left:60.00px;top:465.23px;font-size:37.3px;transform:scaleX(1.0411);">What Drives Us?</h2>
    <p class="t p" style="left:60.30px;top:530.20px;font-size:28px;transform:scaleX(1.0225);">Creativity is our heartbeat. We are driven by the relentless pursuit of excellence that continuously challenges the status quo</p>
    <p class="t p" style="left:60.30px;top:571.40px;font-size:28px;transform:scaleX(1.0235);">advancements and create unparalleled opportunities for our clients and minds. poppins-font-18 text-white</p>

    <h2 class="t h" style="left:60.00px;top:662.33px;font-size:37.3px;transform:scaleX(1.0539);">Our Vision</h2>
    <p class="t p" style="left:60.30px;top:727.40px;font-size:28px;transform:scaleX(1.0187);">We envision a continuously evolving world, where businesses thrive</p>
    <p class="t p" style="left:60.30px;top:768.80px;font-size:28px;transform:scaleX(1.0235);">and individuals achieve their dreams with the support of our seamless</p>
    <p class="t p" style="left:60.30px;top:810.40px;font-size:28px;transform:scaleX(1.0621);">digital solutions.</p>

    <h2 class="t h" style="left:993.50px;top:662.33px;font-size:37.3px;transform:scaleX(1.0452);">Our Vision</h2>
    <p class="t p" style="left:993.80px;top:727.40px;font-size:28px;transform:scaleX(1.0187);">We envision a continuously evolving world, where businesses thrive</p>
    <p class="t p" style="left:993.80px;top:768.80px;font-size:28px;transform:scaleX(1.0235);">and individuals achieve their dreams with the support of our seamless</p>
    <p class="t p" style="left:993.80px;top:810.40px;font-size:28px;transform:scaleX(1.0621);">digital solutions.</p>

    <div id="photo"><svg class="abs" style="left:0;top:0" width="1330" height="185" viewBox="552 1364 1330 185" role="img" aria-label="Doctor consulting a patient next to an ultrasound monitor">
  <defs>
    <filter id="b1" x="-10%" y="-10%" width="120%" height="120%"><feGaussianBlur stdDeviation="0.900"/></filter>
    <filter id="b2" x="-20%" y="-20%" width="140%" height="140%"><feGaussianBlur stdDeviation="2.400"/></filter>
    <filter id="b4" x="-30%" y="-30%" width="160%" height="160%"><feGaussianBlur stdDeviation="5"/></filter>
    <filter id="b8" x="-40%" y="-40%" width="180%" height="180%"><feGaussianBlur stdDeviation="10"/></filter>
    <linearGradient id="wall" x1="0" y1="0" x2="0" y2="1"><stop offset="0" stop-color="#e3e2e0"/><stop offset="1" stop-color="#eceae7"/></linearGradient>
    <linearGradient id="wallL" x1="0" y1="0" x2="1" y2="0"><stop offset="0" stop-color="#ebe9e6"/><stop offset=".6" stop-color="#ecebe8"/><stop offset="1" stop-color="#e6e5e3" stop-opacity="0"/></linearGradient>
    <linearGradient id="paper" x1="0" y1="0" x2="1" y2="0"><stop offset="0" stop-color="#e4dfda"/><stop offset="1" stop-color="#ebe6e1"/></linearGradient>
    <linearGradient id="mon" x1="0" y1="0" x2="0" y2="1"><stop offset="0" stop-color="#1b1c17"/><stop offset=".8" stop-color="#23241d"/><stop offset="1" stop-color="#2c2b22"/></linearGradient>
    <linearGradient id="arm" x1="0" y1="0" x2="0" y2="1"><stop offset="0" stop-color="#e9ebef"/><stop offset=".65" stop-color="#d9dce2"/><stop offset="1" stop-color="#c3c6cd"/></linearGradient>
    <linearGradient id="skin" x1="0" y1="0" x2="1" y2="0"><stop offset="0" stop-color="#e2bfa9"/><stop offset=".4" stop-color="#dfb298"/><stop offset=".75" stop-color="#e3b9a0"/><stop offset="1" stop-color="#e9c8b6"/></linearGradient>
    <linearGradient id="leafA" x1="0" y1="0" x2="1" y2="1"><stop offset="0" stop-color="#5a6c48"/><stop offset="1" stop-color="#3c4e30"/></linearGradient>
    <linearGradient id="leafB" x1="0" y1="0" x2="1" y2="1"><stop offset="0" stop-color="#4f7030"/><stop offset="1" stop-color="#294420"/></linearGradient>
  </defs>

  <!-- back wall -->
  <rect x="552" y="1364" width="1330" height="185" fill="url(#wall)"/>
  <!-- left grey cabinet behind the monitor arm -->
  <rect x="552" y="1364" width="70" height="185" fill="#bdbdc0"/>
  <path d="M552 1500h70v49h-70z" fill="#cfcfd2"/>
  <!-- wallpaper strip -->
  <rect x="980" y="1364" width="120" height="185" fill="url(#paper)"/>
  <rect x="1100" y="1364" width="300" height="185" fill="url(#wallL)"/>
  <rect x="1276" y="1364" width="30" height="185" fill="#f5f4f2" filter="url(#b4)"/>
  <rect x="1099" y="1364" width="2.400" height="185" fill="#f3f0ed"/>
  <g fill="#d8d3ce" filter="url(#b2)" opacity=".8">
    <path d="M992 1372c20-8 58-8 78 0-6 26-22 44-40 50-18-8-32-26-38-50z"/>
    <path d="M1048 1436c16-6 38-4 50 4v30c-18 2-36-2-44-10z"/>
    <path d="M990 1480c14-10 36-8 46 6 4 20-2 40-14 52-20-6-34-30-32-58z"/>
    <path d="M1028 1420c6 30 6 70 14 128h4c-6-58-8-98-12-128z"/>
  </g>
  <!-- soft shadows on wall behind plant / woman -->
  <ellipse cx="1268" cy="1420" rx="34" ry="42" fill="#d4d0ca" opacity=".7" filter="url(#b8)"/>
  <ellipse cx="1330" cy="1510" rx="40" ry="60" fill="#dad7d2" opacity=".6" filter="url(#b8)"/>

  <!-- desk / beige furniture under monitor -->
  <path d="M660 1520h280v29H660z" fill="#c2b29c"/>
  <path d="M700 1524h160v25H700z" fill="#cdbfa9"/>
  <path d="M938 1520h52v29h-52z" fill="#e9e6e1"/>
  <g stroke="#6f665c" stroke-width="2.600" opacity=".75" filter="url(#b1)"><path d="M862 1530l72 6M858 1537l78 6M866 1544l70 4"/></g>
  <!-- monitor arm -->
  <path d="M564 1504c-4-30 10-62 40-76l14-2v98l-40-2c-8-2-14-8-14-18z" fill="url(#arm)" filter="url(#b1)"/>
  <path d="M608 1430c-6 12-4 24 8 34" stroke="#7d8087" stroke-width="2.600" fill="none" filter="url(#b1)"/>
  <path d="M576 1482l40-30v36z" fill="#c6c9cf" filter="url(#b2)"/>
  <path d="M566 1512l50 4 52 33h-56z" fill="#8b8d92" filter="url(#b1)"/>
  <path d="M566 1502h52v12h-52z" fill="#eef0f3" filter="url(#b1)"/>

  <!-- monitor -->
  <path d="M612 1364h377v144c0 7-4 10-10 10l-356 6c-7 0-11-4-11-10z" fill="url(#mon)" filter="url(#b1)"/>
  <path d="M624 1364h8v142h-8z" fill="#14150f" opacity=".6"/>
  <path d="M645 1364h330v136H645z" fill="#1e201b"/>
  <rect x="699" y="1364" width="203" height="89" fill="#0e0f0d"/>
  <path d="M699 1364v89h203v-89" fill="none" stroke="#3d4a50" stroke-width="1.300"/>
  <rect x="700" y="1433" width="201" height="19" fill="#2a2e2c"/>
  <rect x="706" y="1440" width="32" height="4.400" fill="#6d89a8"/><rect x="740" y="1439" width="9" height="4" fill="#c9d3dc"/>
  <rect x="706" y="1433.500" width="34" height="2.600" fill="#8a949c" opacity=".8"/>
  <rect x="866" y="1434" width="4" height="4" fill="#cfd3d6"/>
  <g filter="url(#b2)">
    <ellipse cx="772" cy="1384" rx="12" ry="12" fill="#8f949a" opacity=".8"/>
    <ellipse cx="794" cy="1370" rx="22" ry="7" fill="#c9cdd2" opacity=".85"/>
    <ellipse cx="824" cy="1388" rx="22" ry="16" fill="#4a4c4e" opacity=".8"/>
    <ellipse cx="810" cy="1374" rx="9" ry="5" fill="#e6e8ea" opacity=".8"/>
    <ellipse cx="838" cy="1376" rx="10" ry="12" fill="#5f6264" opacity=".6"/>
  </g>
  <g fill="#566a74" opacity=".8"><rect x="878" y="1370" width="6" height="8"/><rect x="878" y="1390" width="6" height="6"/><rect x="878" y="1404" width="6" height="6"/><rect x="878" y="1416" width="6" height="6"/><rect x="878" y="1428" width="7" height="7"/><rect x="703" y="1408" width="5" height="8"/><rect x="703" y="1422" width="5" height="6"/></g>
  <g fill="#4b4f50" opacity=".7"><rect x="912" y="1372" width="22" height="3"/><rect x="912" y="1388" width="18" height="2.400"/><rect x="912" y="1398" width="54" height="1.600"/><rect x="912" y="1405" width="54" height="1.600"/><rect x="912" y="1412" width="54" height="1.600"/><rect x="912" y="1419" width="54" height="1.600"/><rect x="912" y="1440" width="54" height="2"/></g>
  <rect x="936" y="1438" width="6" height="5" fill="#b9bcbc"/>
  <rect x="845" y="1459" width="33" height="4.600" fill="#2d6e60"/><rect x="879" y="1459.500" width="14" height="3.600" fill="#9da5a6"/><rect x="898" y="1458" width="5" height="6" fill="#3f78d6"/>
  <rect x="696" y="1472" width="42" height="2.600" fill="#a7abab" opacity=".8"/>
  <circle cx="776" cy="1482" r="10" fill="#6c7480" filter="url(#b1)"/><circle cx="775" cy="1480" r="5.500" fill="#a8b0bc" filter="url(#b1)"/>
  <path d="M762 1482h28" stroke="#7e8790" stroke-width="2"/>
  <g fill="#9aa09e" opacity=".85"><rect x="820" y="1469" width="6" height="6"/><rect x="820" y="1479" width="6" height="6"/><rect x="818" y="1488" width="8" height="6"/><rect x="868" y="1469" width="6" height="6"/><rect x="868" y="1479" width="6" height="6"/><rect x="868" y="1488" width="6" height="6"/></g>
  <rect x="828" y="1480" width="5" height="4" fill="#b59a3c"/><rect x="876" y="1478" width="4" height="6" fill="#e8eaea"/><rect x="828" y="1491" width="6" height="2" fill="#3e8a7a"/>
  <g fill="#4a6a5a" opacity=".8"><rect x="922" y="1484" width="5" height="6"/><rect x="932" y="1484" width="5" height="6"/><rect x="952" y="1486" width="4" height="3"/><rect x="962" y="1486" width="4" height="3"/></g>
  <path d="M632 1502l350-6v10l-350 8z" fill="#2a2a22" opacity=".9"/>

  <!-- plant -->
  <g filter="url(#b1)">
    <path d="M1172 1364c4 14 6 24 8 38M1178 1364c1 16 2 30 3 44M1184 1389c8-6 14-10 22-14" stroke="#8a9260" stroke-width="2.200" fill="none"/>
    <path d="M1153 1364c8 6 14 14 16 24l-4 1c-4-9-10-17-16-23z" fill="#8a8c70"/>
    <path d="M1206 1373c36-6 82 4 120 30-40-8-84-16-120-30z" fill="#7f8662"/>
    <path d="M1206 1373c36-2 82 8 120 30" stroke="#a3a886" stroke-width="1.200" fill="none"/>
    <path d="M1183 1404c22-6 48-2 64 10-22 3-46 0-64-10z" fill="#7a8670"/>
    <path d="M1170 1422c14-12 44-6 58 18 10 18 8 30 2 38-4 8-14 6-22 2-18-6-38-28-38-58z" fill="url(#leafA)"/>
    <path d="M1182 1420c10 18 16 38 22 62" stroke="#6d8058" stroke-width="1.400" fill="none"/>
    <path d="M1226 1466c6-2 10 4 10 8-2 8-6 12-10 14-2-8-2-14 0-22z" fill="#46583a"/>
    <path d="M1204 1478c-2 20-4 44-6 70h6c0-26 2-50 4-70z" fill="#3a2e24"/>
    <path d="M1200 1492c-8-4-16 0-20 8M1202 1504c10-4 22 0 28 12M1198 1522c-10-2-20 2-24 10M1202 1532c8-2 18 2 24 10" stroke="#a0946a" stroke-width="2" fill="none"/>
    <path d="M1172 1450c-24 10-50 34-64 64l4 3c18-26 40-48 62-62z" fill="#a9a78c"/>
    <path d="M1232 1458c22 8 34 30 48 60 6 14 8 20 8 28l-8-10c-10-26-24-56-48-74z" fill="#9a9d7c"/>
    <path d="M1108 1549c2-30 26-66 66-76-10 20-16 50-22 76z" fill="url(#leafB)"/>
    <path d="M1122 1549c10-28 26-52 48-72" stroke="#83a060" stroke-width="1.400" fill="none"/>
    <path d="M1134 1549c6-26 30-44 52-44 8 10 10 28 8 44z" fill="#2d4a22"/>
    <path d="M1158 1549c6-18 14-30 26-42" stroke="#6f9450" stroke-width="1.400" fill="none"/>
    <path d="M1198 1549c0-8 2-14 6-18 6 4 14 10 18 18z" fill="#2c4420"/>
    <path d="M1222 1549c-2-14 2-26 10-34 18 4 30 18 36 34z" fill="#355226"/>
    <path d="M1236 1549c-2-12 0-20 4-26" stroke="#7a9a58" stroke-width="1.200" fill="none"/>
  </g>

  <!-- doctor -->
  <g filter="url(#b1)">
    <!-- coat -->
    <path d="M1286 1549c4-14 10-22 22-30l30-22c18-12 34-24 50-36l16-16 106 8 28 24c20 12 40 22 58 32 10 10 16 24 22 40z" fill="#f3f4f5"/>
    <path d="M1300 1549c10-22 30-40 56-50" stroke="#e3e6ea" stroke-width="5" fill="none" opacity=".8"/>
    <path d="M1392 1462c-4 28-6 58-4 87" stroke="#dfe2e6" stroke-width="3" fill="none"/>
    <path d="M1512 1456c6 32 4 62-6 93" stroke="#d6d9dd" stroke-width="3" fill="none"/>
    <path d="M1566 1512c-10 10-14 22-16 37" stroke="#d4d6d9" stroke-width="2.600" fill="none"/>
    <path d="M1540 1478c20 10 40 20 56 30" stroke="#e4e6e9" stroke-width="4" fill="none"/>
    <circle cx="1345" cy="1513" r="2.600" fill="#a3a5a6"/><circle cx="1563" cy="1514" r="2.400" fill="#b6b8b9"/>
    <!-- neck -->
    <path d="M1404 1436c0 20 2 36 8 50 10 16 24 28 38 36 18-2 36-8 48-16 4-14 6-30 6-48z" fill="#cfa184"/>
    <path d="M1416 1462c18 14 50 18 88 4v-12l-86-6z" fill="#b98a6a" opacity=".75" filter="url(#b2)"/>
    <path d="M1408 1470c6 18 18 32 36 44" stroke="#b98d70" stroke-width="3" fill="none" opacity=".7"/>
    <!-- inner shirt + collar -->
    <path d="M1450 1549v-26c16-4 34-8 50-16l2 42z" fill="#dbd6cb"/>
    <path d="M1450 1523c16-2 32-8 46-14l4 8c-14 8-32 12-50 14z" fill="#c8bfae"/>
    <path d="M1396 1456c4 18 12 34 24 48l30 20v25h-64c-2-32 2-64 10-93z" fill="#f8f8f8"/>
    <path d="M1396 1494c6-4 12-6 18-4l6 14c-8 2-16 2-24-2z" fill="#cfc6b5"/>
    <path d="M1500 1468c6 6 10 12 12 20l-10 26c-2-16-2-30-2-46z" fill="#f6f6f6"/>
    <!-- face -->
    <path d="M1402 1364h118c2 22 2 46-2 68-2 12-6 22-10 30-6 8-14 14-22 16-14 2-28 0-36-2-16-8-30-22-40-44-8-20-10-46-8-68z" fill="url(#skin)"/>
    <ellipse cx="1432" cy="1410" rx="20" ry="36" fill="#ecd0bf" opacity=".75" filter="url(#b4)"/>
    <ellipse cx="1470" cy="1430" rx="26" ry="22" fill="#d5a183" opacity=".5" filter="url(#b4)"/>
    <path d="M1452 1450c14 14 36 18 54 10l-6 12c-6 4-12 6-18 6-12 0-22-8-30-28z" fill="#c39678" opacity=".55" filter="url(#b2)"/>
    <path d="M1492 1384c-4 10-8 22-10 30 4 8 18 10 28 4-2-12-6-24-10-34z" fill="#f1d9cd" filter="url(#b2)"/>
    <path d="M1484 1418c8 4 18 4 26-2" stroke="#c9957e" stroke-width="2.400" fill="none" filter="url(#b1)"/>
    <path d="M1473 1440c12-4 24-4 35-2-6 8-22 10-35 2z" fill="#cf8d7e"/>
    <path d="M1474 1440c12-2 22-2 34-2" stroke="#9a5e52" stroke-width="1.500" fill="none"/>
    <path d="M1454 1372c10-6 22-8 32-4M1500 1368c6-3 14-3 20-1" stroke="#8a6a54" stroke-width="2.400" fill="none" opacity=".75"/>
    <ellipse cx="1469" cy="1381" rx="7" ry="2.800" fill="#5a4434"/><ellipse cx="1512" cy="1373" rx="6" ry="2.400" fill="#5a4434"/>
    <path d="M1458 1386c8 3 16 3 24-1" stroke="#caa08a" stroke-width="2" fill="none"/>
    <!-- ear -->
    <path d="M1383 1378c4-6 12-6 16 0 4 10 6 24 4 40-8-4-16-14-18-26-2-6-2-10-2-14z" fill="#d2a68e"/>
    <path d="M1389 1384c4 8 6 18 6 30" stroke="#a87c66" stroke-width="2" fill="none"/>
    <rect x="1400" y="1416" width="4" height="7" rx="1.500" fill="#6e7478"/>
    <!-- hair -->
    <path d="M1358 1364h74c-6 8-14 14-18 22-6-8-14-12-22-10-8 4-10 12-8 22 2 12 8 22 18 30l2 6c-12-2-24-10-32-24-10-16-14-32-14-46z" fill="#44362b"/>
    <path d="M1428 1364h94v3c-20-1-40-1-60 1-12 1-22 3-34 8z" fill="#7a604c" opacity=".6"/>
    <path d="M1372 1372c0 18 8 36 24 50" stroke="#2e241c" stroke-width="2.400" fill="none" opacity=".7"/>
  </g>

  <!-- patient (right edge) -->
  <g filter="url(#b1)">
    <path d="M1858 1364h24v112c-4-1-8-4-10-8-2-6 0-10-2-14-4-4-4-8-2-12-2-4-2-8 0-12-8 0-18-4-23-10-2-4 0-8 3-12 4-10 8-26 10-44z" fill="#e7c3af"/>
    <path d="M1866 1434c5 2 11 2 16 0v5c-6 2-12 0-16-5z" fill="#c58a7c"/>
    <path d="M1868 1383c4-3 10-3 14-1" stroke="#5a463a" stroke-width="2.600" fill="none"/>
    <path d="M1857 1364h25v6c-9-1-18-2-25-6z" fill="#6f5a4a"/>
    <path d="M1874 1518c2 5 5 9 8 12v-14z" fill="#f4f4f3"/>
  </g>
</svg></div>
  </div>
</div>

</div>
</body>
</html>
